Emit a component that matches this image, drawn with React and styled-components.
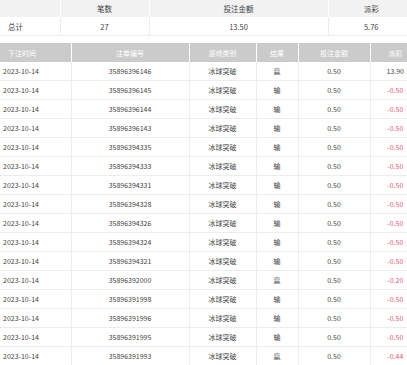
import styled, { createGlobalStyle } from 'styled-components'

const Global = createGlobalStyle`
  html, body {
    margin: 0;
    padding: 0;
    background: #fff;
    overflow: hidden;
  }
  body {
    font-family: "Noto Sans CJK SC", "Noto Sans", sans-serif;
    color: #444;
    -webkit-font-smoothing: antialiased;
  }
`

const Page = styled.div`
  width: 420px;
`

const Table = styled.table`
  width: ${props => props.width}px;
  table-layout: fixed;
  border-collapse: collapse;
  font-size: ${props => props.size || 7}px;
  margin-bottom: ${props => props.gap || 0}px;
`

const SumHead = styled.th`
  height: 17px;
  padding: 0;
  background: #f2f2f2;
  color: #444;
  font-weight: normal;
  text-align: center;
  border-left: 1px solid #fff;
  &:first-child { border-left: none; }
`

const SumCell = styled.td`
  height: 18px;
  padding: 0;
  color: #444;
  text-align: ${props => props.left ? 'left' : 'center'};
  padding-left: ${props => props.left ? '8px' : '0'};
  border-left: 1px solid #ececec;
  border-bottom: 1px solid #ececec;
  &:first-child { border-left: none; }
`

const Head = styled.th`
  height: 19px;
  padding: 0;
  background: #cbcbcb;
  color: #fff;
  font-weight: normal;
  text-align: ${props => props.left ? 'left' : 'center'};
  padding-left: ${props => props.left ? '8px' : '0'};
  border-left: 1px solid #fff;
  &:first-child { border-left: none; }
`

const Cell = styled.td`
  height: 18px;
  padding: 0;
  color: ${props => props.red ? '#e4566e' : '#444'};
  text-align: ${props => props.left ? 'left' : 'center'};
  padding-left: ${props => props.left ? '3px' : '0'};
  border-left: 1px solid #ececec;
  border-bottom: 1px solid #ececec;
  white-space: nowrap;
  &:first-child { border-left: none; }
`

const rows = [
  ['35896396146', '赢', '13.90'],
  ['35896396145', '输', '-0.50'],
  ['35896396144', '输', '-0.50'],
  ['35896396143', '输', '-0.50'],
  ['35896394335', '输', '-0.50'],
  ['35896394333', '输', '-0.50'],
  ['35896394331', '输', '-0.50'],
  ['35896394328', '输', '-0.50'],
  ['35896394326', '输', '-0.50'],
  ['35896394324', '输', '-0.50'],
  ['35896394321', '输', '-0.50'],
  ['35896392000', '赢', '-0.20'],
  ['35896391998', '输', '-0.50'],
  ['35896391996', '输', '-0.50'],
  ['35896391995', '输', '-0.50'],
  ['35896391993', '赢', '-0.44'],
]

const App = () => {
  return (
    <Page>
      <Global />
      <Table width={414} gap={7} size={7.5}>
        <colgroup>
          <col style={{ width: 60 }} />
          <col style={{ width: 89 }} />
          <col style={{ width: 179 }} />
          <col />
        </colgroup>
        <thead>
          <tr>
            <SumHead></SumHead>
            <SumHead>笔数</SumHead>
            <SumHead>投注金额</SumHead>
            <SumHead>派彩</SumHead>
          </tr>
        </thead>
        <tbody>
          <tr>
            <SumCell left>总计</SumCell>
            <SumCell>27</SumCell>
            <SumCell>13.50</SumCell>
            <SumCell>5.76</SumCell>
          </tr>
        </tbody>
      </Table>

      <Table width={420}>
        <colgroup>
          <col style={{ width: 71 }} />
          <col style={{ width: 118 }} />
          <col style={{ width: 67 }} />
          <col style={{ width: 42 }} />
          <col style={{ width: 72 }} />
          <col />
        </colgroup>
        <thead>
          <tr>
            <Head left>下注时间</Head>
            <Head>注单编号</Head>
            <Head>游戏类别</Head>
            <Head>结果</Head>
            <Head>投注金额</Head>
            <Head>派彩</Head>
          </tr>
        </thead>
        <tbody>
          {rows.map(([id, result, payout]) => (
            <tr key={id}>
              <Cell left>2023-10-14</Cell>
              <Cell>{id}</Cell>
              <Cell>冰球突破</Cell>
              <Cell>{result}</Cell>
              <Cell>0.50</Cell>
              <Cell red={payout.startsWith('-')}>{payout}</Cell>
            </tr>
          ))}
        </tbody>
      </Table>
    </Page>
  )
}

export default App
